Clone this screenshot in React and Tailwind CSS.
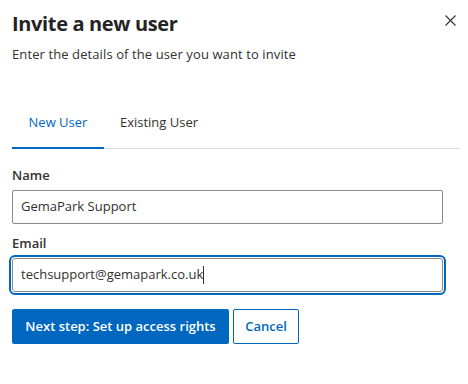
export default function App() {
  const font = { fontFamily: '"Open Sans", "Noto Sans", sans-serif' };
  return (
    <div className="w-[468px] h-[384px] bg-white text-[#323130] relative overflow-hidden" style={font}>
      <div className="pl-3 pr-2">
        <div className="flex items-start justify-between pt-[10px]">
          <h1 className="text-[20px] leading-[28px] font-bold tracking-[-0.35px] text-[#242424]">Invite a new user</h1>
          <button className="w-[24px] h-[24px] mt-[-2px] mr-[-2px] flex items-center justify-center text-[#323130]">
            <svg width="11" height="11" viewBox="0 0 11 11" fill="none" stroke="currentColor" strokeWidth="1.1">
              <path d="M0.5 0.5 L10.5 10.5 M10.5 0.5 L0.5 10.5" />
            </svg>
          </button>
        </div>
        <p className="mt-[7px] text-[13px] leading-[18px] tracking-[0.1px] text-[#323130]">Enter the details of the user you want to invite</p>

        <div className="mt-[49px] flex border-b border-[#e1dfdd]">
          <button className="relative w-[92px] h-[36px] text-[13px] leading-[20px] text-[#0067c0] flex items-start justify-center">
            New User
            <span className="absolute left-0 right-0 bottom-[-1px] h-[2px] bg-[#0067c0]"></span>
          </button>
          <button className="w-[110px] h-[36px] text-[13px] leading-[20px] text-[#323130] flex items-start justify-center">
            Existing User
          </button>
        </div>

        <div className="pr-[17px]">
          <label className="block mt-[17px] text-[13px] leading-[18px] font-semibold text-[#323130]">Name</label>
          <div className="mt-[6px] h-[34px] border border-[#8a8886] rounded-[2px] flex items-center px-[8px] text-[13px] text-[#323130]">
            GemaPark Support
          </div>
          <label className="block mt-[10px] text-[13px] leading-[18px] font-semibold text-[#323130]">Email</label>
          <div className="mt-[6px] h-[34px] border border-[#8a8886] flex items-center px-[8px] text-[13px] text-[#323130] outline-2 outline-offset-[1px] outline-[#0067c0] outline rounded-[3px]">
            techsupport@gemapark.co.uk<span className="inline-block w-px h-[18px] bg-[#323130]"></span>
          </div>
          <div className="mt-[17px] flex gap-[4px]">
            <button className="h-[35px] w-[217px] rounded-[2px] bg-[#0067c0] text-white text-[13px] font-semibold">Next step: Set up access rights</button>
            <button className="h-[35px] w-[66px] rounded-[2px] border border-[#0067c0] text-[#0067c0] text-[13px] font-semibold bg-white">Cancel</button>
          </div>
        </div>
      </div>
    </div>
  );
}
